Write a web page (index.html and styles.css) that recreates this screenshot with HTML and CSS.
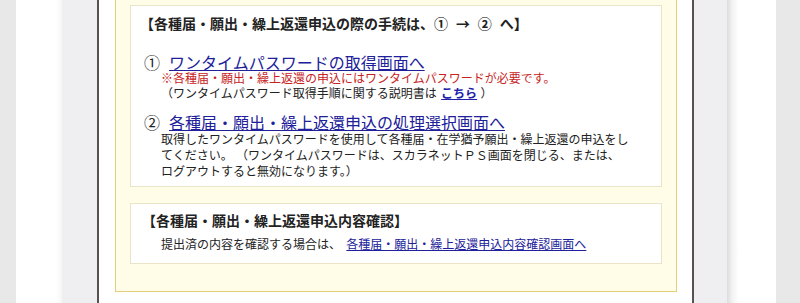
FILE: index.html
```html
<!DOCTYPE html>
<html lang="ja">
<head>
<meta charset="utf-8">
<title>各種届・願出・繰上返還申込</title>
<link rel="stylesheet" href="styles.css">
</head>
<body>
<div class="frame">
  <div class="edge-l"></div>
  <div class="margin-l"></div>
  <div class="rail-l"></div>
  <main class="page">
    <section class="notice">
      <div class="panel panel-steps">
        <h2 class="panel-title title-steps">【各種届・願出・繰上返還申込の際の手続は、① <span class="arrow">→</span> ② へ】</h2>
        <div class="step-row step-first">
          <span class="step-num">①</span><a class="step-link" href="#">ワンタイムパスワードの取得画面へ</a>
        </div>
        <p class="note-red">※各種届・願出・繰上返還の申込にはワンタイムパスワードが必要です。</p>
        <p class="note">（ワンタイムパスワード取得手順に関する説明書は <a class="here" href="#">こちら</a> ）</p>
        <div class="step-row step-second">
          <span class="step-num">②</span><a class="step-link" href="#">各種届・願出・繰上返還申込の処理選択画面へ</a>
        </div>
        <p class="para">取得したワンタイムパスワードを使用して各種届・在学猶予願出・繰上返還の申込をし<br>てください。 （ワンタイムパスワードは、スカラネットＰＳ画面を閉じる、または、<br>ログアウトすると無効になります。）</p>
      </div>
      <div class="panel panel-confirm">
        <h2 class="panel-title">【各種届・願出・繰上返還申込内容確認】</h2>
        <p class="confirm-line">提出済の内容を確認する場合は、 <a class="confirm-link" href="#">各種届・願出・繰上返還申込内容確認画面へ</a></p>
      </div>
    </section>
  </main>
  <div class="rail-r"></div>
  <div class="margin-r"></div>
  <div class="edge-r"></div>
</div>
</body>
</html>
```
FILE: styles.css
```css
html, body {
  margin: 0;
  padding: 0;
  height: 100%;
  background: #ffffff;
}
body {
  font-family: "Liberation Sans", "Noto Sans CJK JP", sans-serif;
  color: #222222;
  overflow: hidden;
}
.frame {
  display: flex;
  height: 100vh;
}
.edge-l { width: 16px; background: #e8e8e8; flex: none; }
.margin-l {
  width: 46px; flex: none;
  background: linear-gradient(to right, #ffffff 0, #ffffff 40px, #f6f6f6 46px);
}
.rail-l { width: 35px; background: #efeff1; flex: none; }
.page {
  width: 562px;
  flex: none;
  border-left: 2px solid #57524f;
  border-right: 2px solid #57524f;
  background: #ffffff;
  padding: 0 15px 0 16px;
}
.rail-r { width: 33px; background: #efeff1; flex: none; }
.margin-r {
  width: 49px; flex: none;
  background: linear-gradient(to right, #dcdcdc 0, #f2f2f2 5px, #ffffff 12px);
}
.edge-r { width: 24px; background: #e8e8e8; flex: none; }

.notice {
  border: 1px solid #e2cf7c;
  border-top: 0;
  background: #fffde8;
  padding: 5px 14px 27px 14px;
}
.panel {
  background: #ffffff;
  border: 1px solid #ece4c6;
}
.panel-title {
  margin: 0;
  font-size: 14px;
  font-weight: bold;
  line-height: 20px;
  color: #222222;
}
.title-steps {
  margin-left: -3px;
  word-spacing: 4px;
}
.arrow {
  font-family: "Noto Sans CJK JP", sans-serif;
}
.panel-steps {
  padding: 7px 12px 6px 12px;
}
.step-row {
  font-size: 16px;
  line-height: 14px;
  padding-left: 1px;
  white-space: nowrap;
}
.step-first { margin-top: 23px; }
.step-second { margin-top: 15px; }
.step-num {
  display: inline-block;
  width: 16px;
  margin-right: 9px;
  color: #222222;
}
.step-link {
  color: #20209a;
  text-decoration: underline;
}
.note-red, .note, .para, .confirm-line {
  margin: 0;
  font-size: 12px;
}
.note-red {
  color: #c82424;
  line-height: 15px;
  margin-top: 1px;
  padding-left: 18px;
}
.note {
  line-height: 15px;
  padding-left: 18px;
}
.here {
  color: #2020a8;
  font-weight: bold;
  text-decoration: underline;
  margin-left: 1px;
}
.para {
  line-height: 16px;
  margin-top: 1px;
  padding-left: 18px;
}
.panel-confirm {
  margin-top: 16px;
  padding: 7px 12px 10px 11px;
}
.confirm-line {
  margin-top: 6px;
  line-height: 16px;
  padding-left: 19px;
}
.confirm-link {
  color: #20209a;
  text-decoration: underline;
  margin-left: 2px;
}
```
